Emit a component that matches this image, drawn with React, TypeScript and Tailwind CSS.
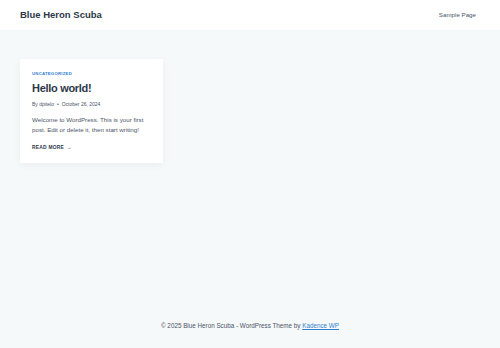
export default function App() {
  return (
    <div
      className="min-h-screen flex flex-col bg-[#f6f9fa] text-[#4a5568]"
      style={{ fontFamily: '"Liberation Sans", Arial, sans-serif' }}
    >
      {/* Header */}
      <header className="h-[30px] bg-white flex items-center justify-between px-[20px]">
        <div className="text-[9.5px] font-bold text-[#2d3748] leading-none">Blue Heron Scuba</div>
        <nav className="text-[6.2px] text-[#4a5568] pr-[4px] leading-none">Sample Page</nav>
      </header>

      {/* Posts */}
      <main className="flex-1 px-[20px] pt-[29px]">
        <article className="w-[143px] bg-white px-[12px] pt-[12px] pb-[12px] shadow-[0_2px_8px_rgba(0,0,0,0.05)]">
          <div className="text-[4.3px] leading-[6px] font-bold uppercase tracking-[0.05em] text-[#3182ce]">
            Uncategorized
          </div>
          <h2 className="mt-[4px] text-[11px] leading-[14px] font-bold tracking-[-0.3px] text-[#2d3748]">
            Hello world!
          </h2>
          <div className="mt-[5px] text-[5px] leading-[8px] text-[#4a5568] flex items-center">
            <span>By dpitelo</span>
            <span className="mx-[3px]">•</span>
            <span>October 26, 2024</span>
          </div>
          <p className="mt-[7px] text-[6.2px] leading-[10px] text-[#4a5568]">
            Welcome to WordPress. This is your first post. Edit or delete it, then start writing!
          </p>
          <div className="mt-[8.5px] text-[4.9px] leading-[7px] font-bold uppercase tracking-[0.05em] text-[#2d3748]">
            Read More <span className="ml-[1px]">→</span>
          </div>
        </article>
      </main>

      {/* Footer */}
      <footer className="pb-[18px] text-center text-[6.3px] leading-[8px] text-[#4a5568]">
        © 2025 Blue Heron Scuba - WordPress Theme by{' '}
        <a className="underline text-[#3182ce]" href="#">
          Kadence WP
        </a>
      </footer>
    </div>
  );
}
